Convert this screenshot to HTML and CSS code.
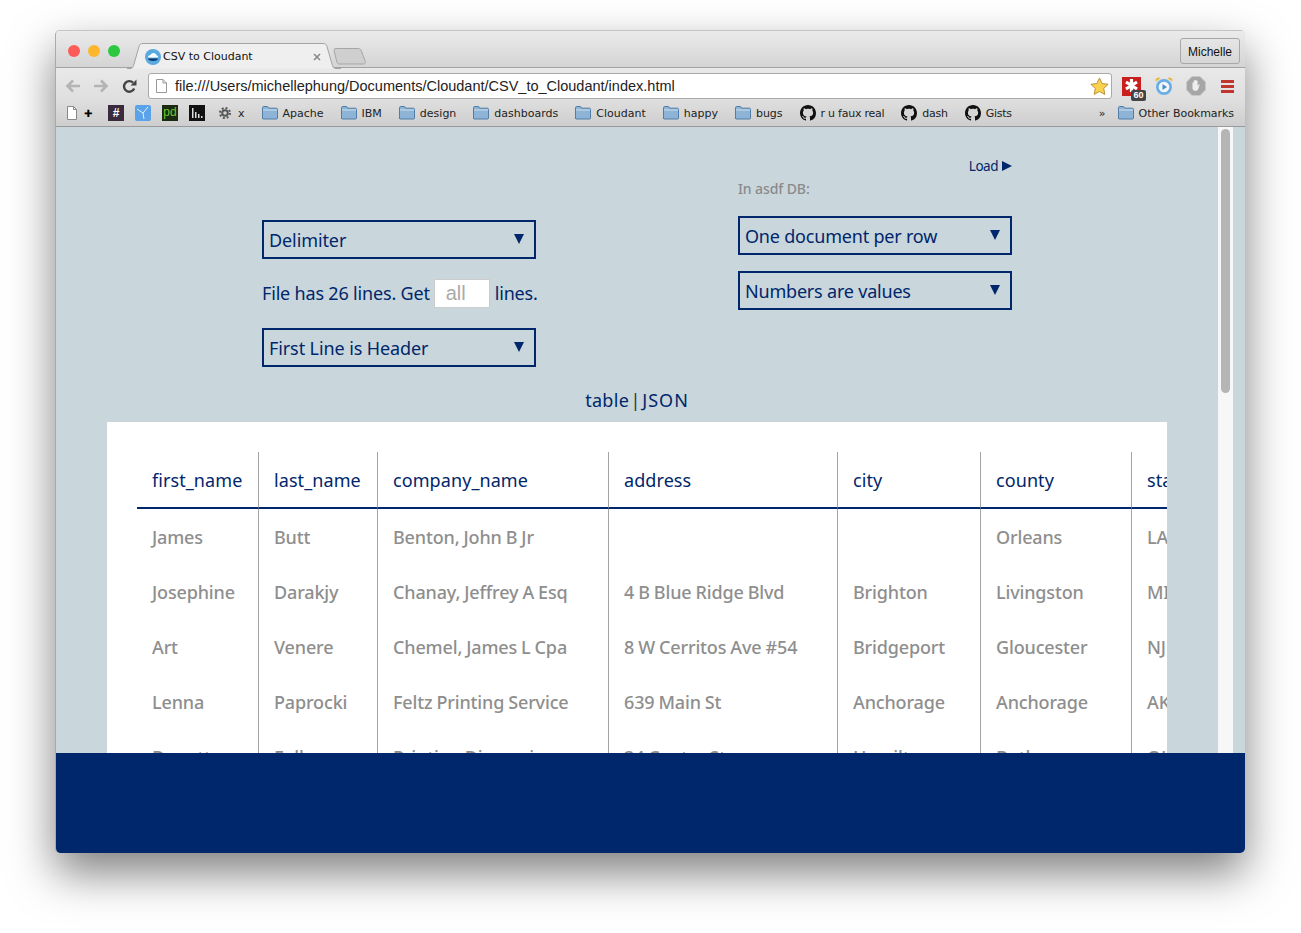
FILE: index.html

```html
<!DOCTYPE html>
<html lang="en">
<head>
    <meta charset="UTF-8">
    <title>CSV to Cloudant</title>
    <link rel="stylesheet" href="styles.css">
</head>
<body>
    <svg class="defs" width="0" height="0">
        <symbol id="folder" viewBox="0 0 16 14">
            <path d="M.5 12.5V1.6C.5 1 1 .5 1.6 .5h3.6c.5 0 .8.3 1 .7l.5 1h7.7c.6 0 1.1.5 1.1 1.1v8.7c0 .6-.5 1-1.1 1H1.6c-.6 0-1.1-.4-1.1-1z" fill="#8db4d6" stroke="#4f7da6"/>
            <path d="M1 4h14" stroke="#cfe0ee"/>
        </symbol>
        <symbol id="octocat" viewBox="0 0 16 16">
            <path fill="#111" d="M8 0C3.58 0 0 3.58 0 8c0 3.54 2.29 6.53 5.47 7.59.4.07.55-.17.55-.38 0-.19-.01-.82-.01-1.49-2.01.37-2.53-.49-2.69-.94-.09-.23-.48-.94-.82-1.13-.28-.15-.68-.52-.01-.53.63-.01 1.08.58 1.23.82.72 1.21 1.87.87 2.33.66.07-.52.28-.87.51-1.07-1.78-.2-3.64-.89-3.64-3.95 0-.87.31-1.59.82-2.15-.08-.2-.36-1.02.08-2.12 0 0 .67-.21 2.2.82.64-.18 1.32-.27 2-.27.68 0 1.36.09 2 .27 1.53-1.04 2.2-.82 2.2-.82.44 1.1.16 1.92.08 2.12.51.56.82 1.27.82 2.15 0 3.07-1.87 3.75-3.65 3.95.29.25.54.73.54 1.48 0 1.07-.01 1.93-.01 2.2 0 .21.15.46.55.38A8.013 8.013 0 0016 8c0-4.42-3.58-8-8-8z"/>
        </symbol>
    </svg>

    <div class="window">
        <div class="titlebar">
            <div class="lights">
                <span class="light red"></span>
                <span class="light yellow"></span>
                <span class="light green"></span>
            </div>
            <div class="tab">
                <svg class="tab-shape" width="214" height="26" viewBox="0 0 214 26">
                    <path d="M0 25.500h3c2 0 3-1 3.600-3L12 3.500C12.600 1.500 13.500 .5 16 .5h180c2.500 0 3.400 1 4 3l5.400 19c.6 2 1.600 3 3.600 3h5" fill="#efefef" stroke="#a3a3a3"/>
                </svg>
                <svg class="favicon" width="16" height="16" viewBox="0 0 16 16">
                    <circle cx="8" cy="8" r="8" fill="#5aa9e0"/>
                    <path d="M3 8.500c0-1.500 1.200-2.500 2.500-2.400C6 4.800 7.200 4 8.500 4c1.500 0 2.700 1 3 2.300 1 .1 1.700 1 1.500 2.200z" fill="#fff"/>
                    <path d="M3 9.500h10c0 1.600-2 2.500-5 2.500s-5-.9-5-2.500z" fill="#0d3a6e"/>
                </svg>
                <span class="tab-title">CSV to Cloudant</span>
                <svg class="tab-close" width="8" height="8" viewBox="0 0 8 8">
                    <path d="M1 1l6 6M7 1L1 7" stroke="#8a8a8a" stroke-width="1.600"/>
                </svg>
            </div>
            <svg class="new-tab" width="34" height="17" viewBox="0 0 34 17">
                <path d="M5.500 .5h20c1.500 0 2.200.7 2.700 2l4 11c.5 1.500-.2 2.500-1.700 2.500H6.500c-1.500 0-2.200-.8-2.600-2L1 2.500C.7 1.300 1.500 .5 3 .5z" fill="#cfcfcf" stroke="#a5a5a5"/>
            </svg>
            <div class="user-button">Michelle</div>
        </div>

        <div class="toolbar">
            <svg class="nav-icon" width="16" height="14" viewBox="0 0 16 14">
                <path d="M15 7H3M8 1.500L2.500 7 8 12.500" fill="none" stroke="#b4b4b4" stroke-width="2.600"/>
            </svg>
            <svg class="nav-icon" width="16" height="14" viewBox="0 0 16 14">
                <path d="M1 7h12M8 1.500L13.500 7 8 12.500" fill="none" stroke="#b4b4b4" stroke-width="2.600"/>
            </svg>
            <svg class="nav-icon reload" width="15" height="15" viewBox="0 0 15 15">
                <path d="M12.200 9.500A5.300 5.300 0 1 1 11 3.600" fill="none" stroke="#444" stroke-width="2.400"/>
                <path d="M8.500 6.500L14.500 6.500 14.500 .5z" fill="#444"/>
            </svg>
            <div class="omnibox">
                <svg class="doc-icon" width="11" height="14" viewBox="0 0 11 14">
                    <path d="M.5 .5h6.500l3.500 3.500v9.500H.5z" fill="#fff" stroke="#999"/>
                    <path d="M7 .5V4h3.500" fill="none" stroke="#999"/>
                </svg>
                <span class="url">file:///Users/michellephung/Documents/Cloudant/CSV_to_Cloudant/index.html</span>
                <svg class="star" width="19" height="18" viewBox="0 0 19 18">
                    <path d="M9.500 1l2.600 5.500 6 .8-4.400 4.100 1.100 6-5.300-2.900-5.300 2.900 1.100-6L.9 7.300l6-.8z" fill="#fbd24e" stroke="#b8923a"/>
                </svg>
            </div>
            <div class="extensions">
                <div class="ext-red">
                    <svg width="19" height="19" viewBox="0 0 19 19">
                        <rect width="19" height="19" fill="#c8201c"/>
                        <path d="M9.500 2v13M4 5l11 7M15 5L4 12" stroke="#fff" stroke-width="3.200"/>
                    </svg>
                    <span class="ext-badge">60</span>
                </div>
                <svg width="20" height="20" viewBox="0 0 20 20">
                    <path d="M1.500 5.500a3 3 0 0 1 5-3zM18.500 5.500a3 3 0 0 0-5-3z" fill="#e8b93c"/>
                    <circle cx="10" cy="11" r="8" fill="#6aaee6"/>
                    <circle cx="10" cy="11" r="5.300" fill="#f3f6f8"/>
                    <path d="M8.500 8l4.500 3-4.500 3z" fill="#4a8ccc"/>
                </svg>
                <svg width="20" height="20" viewBox="0 0 20 20">
                    <path d="M6 .5h8L19.500 6v8L14 19.500H6L.5 14V6z" fill="#a6a6a6" stroke="#c8c8c8"/>
                    <path d="M6.500 10V6.500h1.200V10V4.500h1.300V10V4h1.300v6V4.800h1.300V10l1.200-1.500c.6-.4 1 0 .8.600l-1.600 4.500c-.3.800-.8 1.100-1.600 1.100H9c-1.500 0-2.500-1-2.500-2.500z" fill="#eee"/>
                </svg>
                <svg class="ext-menu" width="13" height="13" viewBox="0 0 13 13">
                    <path d="M0 0h13v3H0zM0 5h13v3H0zM0 10h13v3H0z" fill="#c0352d"/>
                </svg>
            </div>
        </div>

        <div class="bookmarks">
            <svg class="bm-first" width="10" height="14" viewBox="0 0 10 14">
                <path d="M.5 .5h6l3 3v10h-9z" fill="#fff" stroke="#888"/>
                <path d="M6.500 .5v3h3" fill="none" stroke="#888"/>
            </svg>
            <span class="bm-plus">✚</span>
            <span class="bm-tile hash">#</span>
            <svg class="bm-tile" width="16" height="16" viewBox="0 0 16 16">
                <rect width="16" height="16" rx="2" fill="#5aa2ea"/>
                <path d="M2 4l6 4 5-6M8 8l1 6" fill="none" stroke="#e4f0fb"/>
            </svg>
            <span class="bm-tile pd">pd</span>
            <svg class="bm-tile" width="16" height="16" viewBox="0 0 16 16">
                <rect width="16" height="16" fill="#111"/>
                <path d="M3 3h1.500v10H3zM6 7h1.500v6H6zM9 9h1.500v4H9zM12 11h1.500v2H12z" fill="#ddd"/>
            </svg>
            <svg class="bm-gear" width="12" height="12" viewBox="0 0 12 12">
                <circle cx="6" cy="6" r="2.800" fill="none" stroke="#555" stroke-width="2"/>
                <circle cx="6" cy="6" r="5" fill="none" stroke="#555" stroke-width="2" stroke-dasharray="1.960 1.960"/>
            </svg>
            <span class="bm-label bm-x">x</span>
            <div class="bm-item"><svg width="16" height="14"><use href="#folder"/></svg><span class="bm-label">Apache</span></div>
            <div class="bm-item"><svg width="16" height="14"><use href="#folder"/></svg><span class="bm-label">IBM</span></div>
            <div class="bm-item"><svg width="16" height="14"><use href="#folder"/></svg><span class="bm-label">design</span></div>
            <div class="bm-item"><svg width="16" height="14"><use href="#folder"/></svg><span class="bm-label">dashboards</span></div>
            <div class="bm-item"><svg width="16" height="14"><use href="#folder"/></svg><span class="bm-label">Cloudant</span></div>
            <div class="bm-item"><svg width="16" height="14"><use href="#folder"/></svg><span class="bm-label">happy</span></div>
            <div class="bm-item"><svg width="16" height="14"><use href="#folder"/></svg><span class="bm-label">bugs</span></div>
            <div class="bm-item bm-gh"><svg width="16" height="16"><use href="#octocat"/></svg><span class="bm-label">r u faux real</span></div>
            <div class="bm-item bm-gh"><svg width="16" height="16"><use href="#octocat"/></svg><span class="bm-label">dash</span></div>
            <div class="bm-item bm-gh"><svg width="16" height="16"><use href="#octocat"/></svg><span class="bm-label">Gists</span></div>
            <span class="bm-more">»</span>
            <div class="bm-item bm-other"><svg width="16" height="14"><use href="#folder"/></svg><span class="bm-label">Other Bookmarks</span></div>
        </div>

        <div class="viewport">
            <div class="page">
                <div class="controls">
                    <div class="col-left">
                        <div class="select">Delimiter</div>
                        <p class="lines">File has 26 lines. Get <input class="lines-input" type="text" placeholder="all"> lines.</p>
                        <div class="select">First Line is Header</div>
                    </div>
                    <div class="col-right">
                        <div class="load">Load <span class="load-arrow"></span></div>
                        <div class="db-name">In asdf DB:</div>
                        <div class="select">One document per row</div>
                        <div class="select">Numbers are values</div>
                    </div>
                </div>
                <div class="view-switch">table <span class="divider">|</span> <span class="json">JSON</span></div>
                <div class="panel">
                    <table class="data">
                        <colgroup>
                            <col class="c1"><col class="c2"><col class="c3"><col class="c4"><col class="c5"><col class="c6"><col class="c7">
                        </colgroup>
                        <thead>
                            <tr><th>first_name</th><th>last_name</th><th>company_name</th><th>address</th><th>city</th><th>county</th><th>state</th></tr>
                        </thead>
                        <tbody>
                            <tr><td>James</td><td>Butt</td><td>Benton, John B Jr</td><td></td><td></td><td>Orleans</td><td>LA</td></tr>
                            <tr><td>Josephine</td><td>Darakjy</td><td>Chanay, Jeffrey A Esq</td><td>4 B Blue Ridge Blvd</td><td>Brighton</td><td>Livingston</td><td>MI</td></tr>
                            <tr><td>Art</td><td>Venere</td><td>Chemel, James L Cpa</td><td>8 W Cerritos Ave #54</td><td>Bridgeport</td><td>Gloucester</td><td>NJ</td></tr>
                            <tr><td>Lenna</td><td>Paprocki</td><td>Feltz Printing Service</td><td>639 Main St</td><td>Anchorage</td><td>Anchorage</td><td>AK</td></tr>
                            <tr><td>Donette</td><td>Foller</td><td>Printing Dimensions</td><td>34 Center St</td><td>Hamilton</td><td>Butler</td><td>OH</td></tr>
                        </tbody>
                    </table>
                </div>
            </div>
            <div class="scrollbar"><div class="scroll-thumb"></div></div>
        </div>

        <div class="footer"></div>
    </div>
</body>
</html>
```

FILE: styles.css

```css
html, body { margin: 0; padding: 0; background: #fff; height: 100%; overflow: hidden; }
.defs { display: block; height: 0; }

.window {
    display: flex;
    flex-direction: column;
    width: 1190px;
    height: 823px;
    margin: 30px 0 0 55px;
    box-sizing: border-box;
    border-left: 1px solid #aaa;
    border-radius: 5px;
    overflow: hidden;
    background: #c9d6dc;
    box-shadow: 0 20px 45px rgba(0, 0, 0, .5);
}

/* title bar */
.titlebar {
    display: flex;
    height: 38px;
    box-sizing: border-box;
    flex: none;
    border-top: 1px solid #c4c4c4;
    border-bottom: 1px solid #a3a3a3;
    background: linear-gradient(#ebebeb, #d4d4d4);
}
.lights { display: flex; gap: 8px; padding: 14px 0 0 12px; }
.light { width: 12px; height: 12px; border-radius: 50%; }
.light.red { background: #fc5b57; }
.light.yellow { background: #fdb62d; }
.light.green { background: #2bc840; }

.tab {
    position: relative;
    display: flex;
    align-items: center;
    width: 202px;
    height: 25px;
    box-sizing: border-box;
    padding-top: 2px;
    margin: 12px 0 0 10px;
    font: 11px "DejaVu Sans", sans-serif;
    color: #111;
}
.tab-shape { position: absolute; left: -3px; top: 0; }
.favicon { position: relative; margin-left: 15px; }
.tab-title { position: relative; margin-left: 2px; }
.tab-close { position: relative; margin-left: 60px; }
.new-tab { margin: 17px 0 0 1px; }

.user-button {
    margin: 7px 5px 0 auto;
    width: 60px;
    height: 26px;
    box-sizing: border-box;
    padding-top: 1px;
    border: 1px solid #a8a8a8;
    border-radius: 3px;
    font: 12px/24px "Liberation Sans", sans-serif;
    text-align: center;
    color: #111;
}

/* toolbar */
.toolbar {
    display: flex;
    align-items: center;
    height: 31px;
    box-sizing: border-box;
    padding-top: 5px;
    flex: none;
    background: linear-gradient(#e9e9e9, #dfdfdf);
}
.nav-icon { margin-left: 9px; margin-right: 2px; }
.nav-icon:nth-child(2) { margin-left: 10px; }
.nav-icon.reload { margin-left: 11px; }
.omnibox {
    display: flex;
    align-items: center;
    width: 964px;
    height: 26px;
    margin-left: 9px;
    box-sizing: border-box;
    border: 1px solid #a9a9a9;
    border-radius: 3px;
    background: #fff;
}
.doc-icon { margin-left: 7px; }
.url { margin-left: 8px; font: 14.5px "Liberation Sans", sans-serif; color: #222; }
.star { margin-left: auto; margin-right: 2px; }
.extensions { display: flex; align-items: center; gap: 12px; margin-left: 10px; }
.ext-red { position: relative; width: 19px; height: 19px; margin-right: 1px; }
.ext-red svg { display: block; }
.ext-badge {
    position: absolute;
    left: 9px;
    top: 13px;
    width: 15px;
    height: 11px;
    border-radius: 2px;
    background: #444;
    color: #fff;
    font: bold 9px/11px "Liberation Sans", sans-serif;
    text-align: center;
}
.ext-menu { margin-left: 3px; }

/* bookmarks */
.bookmarks {
    display: flex;
    align-items: center;
    height: 28px;
    box-sizing: border-box;
    flex: none;
    padding-top: 1px;
    border-bottom: 1px solid #9a9a9a;
    background: linear-gradient(#dfdfdf, #cecece);
    font: 11px "DejaVu Sans", sans-serif;
    color: #222;
}
.bm-first { margin-left: 11px; }
.bm-plus { margin-left: 7px; width: 10px; font-size: 10px; color: #000; }
.bm-tile { margin-left: 11px; flex: none; }
.bm-plus + .bm-tile { margin-left: 14px; }
.hash {
    width: 16px;
    height: 16px;
    background: #3a2a3e;
    color: #fff;
    font: bold 12px/16px "Liberation Sans", sans-serif;
    text-align: center;
}
.pd {
    width: 16px;
    height: 16px;
    background: #1b2b12;
    color: #6fc62e;
    font: 12px/15px "Liberation Sans", sans-serif;
    text-align: center;
}
.bm-gear { margin-left: 14px; flex: none; }
.bm-x { margin-left: 7px; }
.bm-item { display: flex; align-items: center; gap: 5px; margin-left: 17px; white-space: nowrap; }
.bm-item svg { flex: none; }
.bm-gh { letter-spacing: -.25px; }
.bm-more { margin-left: auto; }
.bm-other { margin: 0 11px 0 12px; letter-spacing: -.05px; }

/* page */
.viewport { flex: 1; display: flex; min-height: 0; }
.page {
    flex: 1;
    min-width: 0;
    padding-top: 29px;
    overflow: hidden;
    font-family: "Noto Sans", sans-serif;
    font-size: 18px;
    letter-spacing: -.1px;
    color: #00266b;
}
.controls { display: flex; justify-content: space-between; width: 750px; margin: 0 auto; height: 232px; }
.col-left { width: 274px; padding-top: 64px; }
.col-right { width: 274px; }

.select {
    position: relative;
    height: 39px;
    box-sizing: border-box;
    padding-left: 5px;
    border: 2px solid #00266b;
    line-height: 37px;
}
.select::after {
    content: "";
    position: absolute;
    right: 10px;
    top: 12px;
    border-left: 5px solid transparent;
    border-right: 5px solid transparent;
    border-top: 10px solid #00266b;
}
.col-right .select { letter-spacing: -.2px; }
.col-right .select + .select { margin-top: 16px; }

.lines {
    display: flex;
    align-items: flex-start;
    gap: 4px;
    height: 29px;
    margin: 20px 0;
    line-height: 28px;
    letter-spacing: -.18px;
    white-space: nowrap;
    width: 290px;
}
.lines-input {
    width: 56px;
    height: 29px;
    margin-right: 1px;
    box-sizing: border-box;
    padding: 0 0 0 11px;
    border: 1px solid #ccc;
    background: #fff;
    font: 20px "Liberation Sans", sans-serif;
}
.lines-input::placeholder { color: #aaa; opacity: 1; }

.load { height: 20px; font-size: 13.5px; line-height: 20px; letter-spacing: -.5px; text-align: right; }
.load-arrow {
    display: inline-block;
    margin-left: 1px;
    border-top: 5px solid transparent;
    border-bottom: 5px solid transparent;
    border-left: 10px solid #00266b;
}
.db-name { height: 20px; margin: 3px 0 17px; font-size: 14px; font-weight: 500; line-height: 20px; letter-spacing: -.1px; color: #8a8a8a; }

.view-switch { height: 24px; margin-bottom: 10px; line-height: 24px; letter-spacing: .3px; text-align: center; word-spacing: -3.5px; }
.divider { color: #333; }
.json { letter-spacing: 1px; }

.panel { margin: 0 51px; padding: 30px 0 0 30px; background: #fff; overflow: hidden; min-height: 400px; box-sizing: border-box; }
.data { border-collapse: separate; border-spacing: 0; table-layout: fixed; width: 1100px; }
.c1 { width: 122px; }
.c2 { width: 119px; }
.c3 { width: 231px; }
.c4 { width: 229px; }
.c5 { width: 143px; }
.c6 { width: 151px; }
.c7 { width: 105px; }
.data th, .data td { padding: 0 0 0 15px; border-right: 1px solid #a3a3a3; text-align: left; font-weight: normal; white-space: nowrap; overflow: hidden; }
.data th:last-child, .data td:last-child { border-right: 0; }
.data th { height: 55px; border-bottom: 2px solid #00266b; color: #00266b; letter-spacing: .08px; }
.data td { height: 55px; color: #8e8e8e; font-weight: 500; letter-spacing: -.15px; word-spacing: -.5px; }

.scrollbar { width: 15px; margin-right: 12px; flex: none; background: #f7f7f7; box-sizing: border-box; padding: 2px 3px; }
.scroll-thumb { height: 264px; border-radius: 5px; background: #b5b5b5; }

.footer { height: 100px; flex: none; background: #00266b; }
```
